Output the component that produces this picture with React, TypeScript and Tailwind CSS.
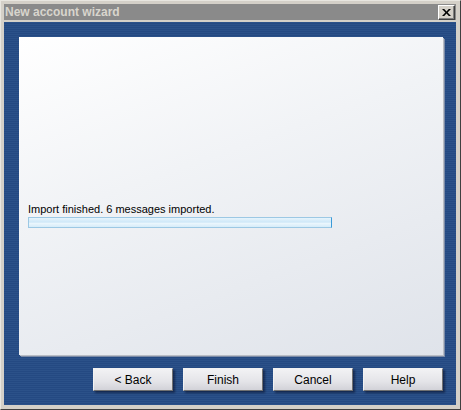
import type { JSX } from "react";

const buttons = ["< Back", "Finish", "Cancel", "Help"];

export default function App(): JSX.Element {
	return (
		<div className="flex h-[410px] w-[461px] flex-col border-l border-t border-l-[#e8e6e0] border-t-[#e8e6e0] border-r border-b border-r-[#404040] border-b-[#404040] bg-[#d4d0c8] pl-[3px] pr-[4px] pt-[3px] pb-[4px] font-['Liberation_Sans',Arial,sans-serif]">
			<div className="flex h-[16px] shrink-0 items-center justify-between bg-[#8a8a8a] pl-[1px] pr-[1px]">
				<span className="text-[12px] font-bold leading-none text-[#d8d5cd]">New account wizard</span>
				<button
					type="button"
					className="flex h-[15px] w-[17px] items-center justify-center border-l border-t border-l-white border-t-white border-r border-b border-r-[#404040] border-b-[#404040] bg-[#d4d0c8] shadow-[inset_-1px_-1px_0_#808080]"
				>
					<svg width="9" height="7" viewBox="0 0 9 7" aria-hidden="true">
						<path d="M0 0h2.2l2.3 2.5L6.8 0H9L5.6 3.5 9 7H6.8L4.5 4.5 2.2 7H0l3.4-3.5z" fill="#000" />
					</svg>
				</button>
			</div>
			<div className="mt-[2px] flex flex-1 flex-col bg-[repeating-linear-gradient(180deg,#2b5189_0px,#2b5189_1px,#244982_1px,#244982_2px)] pl-[15px] pr-[13px] pt-[15px] pb-[14px]">
				<div className="flex h-[318px] flex-col justify-start bg-[linear-gradient(160deg,#ffffff_0%,#f1f3f6_40%,#dfe3ea_100%)] px-[9px] pt-[166px] shadow-[1px_1px_0_#b8bcc4,2px_2px_0_#7a8aa6]">
					<div className="text-[11px] leading-[13px] text-black">Import finished. 6 messages imported.</div>
					<div className="mt-[1px] h-[11px] w-[304px] border border-[#9cc8e4] border-r-[#3a9ad8] bg-[linear-gradient(180deg,#e6f4fc_0%,#cfe8f8_45%,#eaf6fd_60%,#d6ecf9_100%)]" />
				</div>
				<div className="mt-[13px] flex justify-end gap-[10px]">
					{buttons.map((label) => (
						<button
							key={label}
							type="button"
							className="h-[23px] w-[80px] border-l border-t border-l-[#f2f2f2] border-t-[#f2f2f2] border-r border-b border-r-[#707070] border-b-[#707070] bg-[linear-gradient(180deg,#f2f2f4_0%,#e4e4e8_60%,#d2d2d8_100%)] text-[12px] text-black shadow-[2px_2px_2px_rgba(0,0,20,0.45)]"
						>
							{label}
						</button>
					))}
				</div>
			</div>
		</div>
	);
}
